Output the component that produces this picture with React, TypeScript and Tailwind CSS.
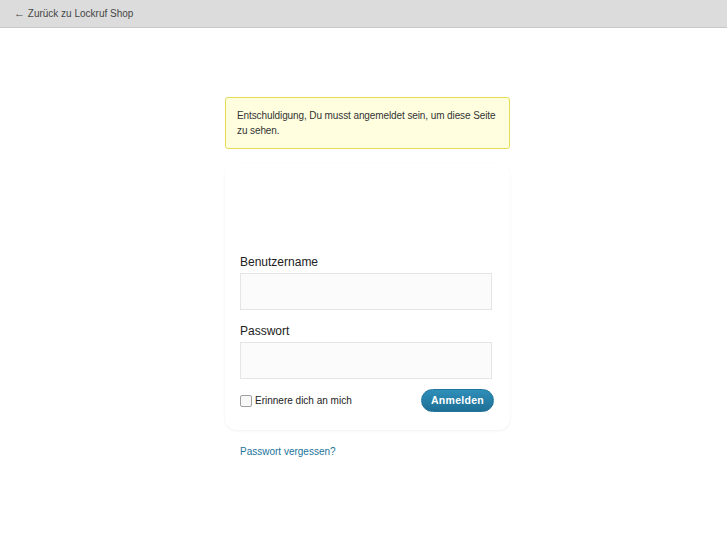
export default function App() {
  return (
    <div className="min-h-[545px] bg-white" style={{ fontFamily: '"Liberation Sans", Arial, sans-serif' }}>
      {/* Back link bar */}
      <div className="h-[28px] bg-[#dcdcdc] border-b border-[#c8c8c8] flex items-center pl-[14px]">
        <a href="#" className="text-[10px] text-[#464646]">
          <span className="text-[11px]">←</span> Zurück zu Lockruf Shop
        </a>
      </div>

      <div className="w-[285px] ml-[225px] pt-[69px]">
        {/* Notice */}
        <div className="bg-[#ffffe0] border border-[#e6db55] rounded-[3px] px-[11px] pt-[10px] pb-[10px] text-[10px] leading-[15px] text-[#333] tracking-[-0.1px]">
          Entschuldigung, Du musst angemeldet sein, um diese Seite zu sehen.
        </div>

        {/* Login form */}
        <form className="mt-[14px] bg-white rounded-[12px] shadow-[0_1px_3px_rgba(0,0,0,0.06)] pl-[15px] pr-[15px] pt-[92px] pb-[18px]">
          <label className="block text-[12px] text-[#222] leading-[15px]">Benutzername</label>
          <input
            type="text"
            className="block mt-[3px] w-[252px] h-[37px] bg-[#fbfbfb] border border-[#e5e5e5] outline-none"
          />
          <label className="block mt-[14px] text-[12px] text-[#222] leading-[15px]">Passwort</label>
          <input
            type="password"
            className="block mt-[3px] w-[252px] h-[37px] bg-[#fbfbfb] border border-[#e5e5e5] outline-none"
          />
          <div className="mt-[10px] flex items-center justify-between">
            <label className="flex items-center gap-[3px] text-[10px] text-[#222]">
              <span className="w-[12px] h-[12px] border border-[#a0a0a0] rounded-[2px] bg-[#f8f8f8]" />
              Erinnere dich an mich
            </label>
            <button
              type="button"
              className="mr-[1px] w-[73px] h-[23px] rounded-full bg-gradient-to-b from-[#2e8fba] to-[#1f6f94] border border-[#21759b] text-white text-[10.5px] font-bold tracking-[0.3px]"
            >
              Anmelden
            </button>
          </div>
        </form>

        <div className="pl-[15px] mt-[8px]">
          <a href="#" className="text-[10px] text-[#21759b]">Passwort vergessen?</a>
        </div>
      </div>
    </div>
  );
}
